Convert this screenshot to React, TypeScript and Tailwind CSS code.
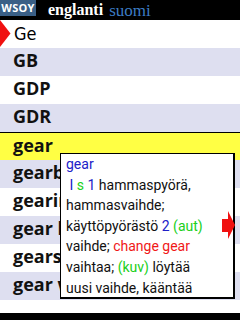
import React from "react";

const rows: { t: string; bg: string }[] = [
  { t: "GB", bg: "bg-[#dedff0]" },
  { t: "GDP", bg: "bg-white" },
  { t: "GDR", bg: "bg-[#dedff0]" },
];
const rows2: { t: string; bg: string }[] = [
  { t: "gearbox", bg: "bg-[#dedff0]" },
  { t: "gearing", bg: "bg-white" },
  { t: "gear lever", bg: "bg-[#dedff0]" },
  { t: "gearshift", bg: "bg-white" },
  { t: "gear wheel", bg: "bg-[#dedff0]" },
];

export default function App() {
  const listFont = { fontFamily: '"Open Sans", sans-serif' };
  return (
    <div className="relative w-[240px] h-[320px] overflow-hidden bg-white">
      <div className="flex h-[20px] bg-black items-start">
        <div className="flex h-[16px] w-[36px] items-center justify-center bg-[#3a5f86] text-white text-[11px] font-bold tracking-[0.3px]" style={listFont}>
          WSOY
        </div>
        <div className="ml-[12px] flex items-center h-[20px] text-[16px] leading-none" style={{ fontFamily: '"Liberation Serif", serif' }}>
          <span className="text-white font-bold">englanti</span>
          <span className="ml-[6px] text-[#3c7cc4] text-[17px]">suomi</span>
        </div>
      </div>
      <div className="flex flex-col">
        <div className="relative flex h-[28px] items-center bg-white pl-[14px] pb-[2px] text-[18px] text-black" style={{ fontFamily: '"DejaVu Sans Condensed", "DejaVu Sans", sans-serif' }}>
          <svg className="absolute left-0 top-0" width="11" height="28" viewBox="0 0 11 28">
            <polygon points="0,0 10.5,13.5 0,27" fill="#f01010" />
          </svg>
          Ge
        </div>
        {rows.map((r) => (
          <div key={r.t} className={`flex h-[28px] items-center pl-[13px] pb-[3px] text-[18px] font-bold text-[#111] ${r.bg}`} style={listFont}>
            {r.t}
          </div>
        ))}
        <div className="flex h-[28px] items-center border-t border-black bg-[#ffff44] pl-[13px] pb-[3px] text-[18px] font-bold text-[#111]" style={listFont}>
          gear
        </div>
        {rows2.map((r) => (
          <div key={r.t} className={`flex h-[28px] items-center pl-[13px] pb-[3px] text-[18px] font-bold text-[#111] whitespace-nowrap ${r.bg}`} style={listFont}>
            {r.t}
          </div>
        ))}
      </div>
      <div className="absolute left-0 bottom-0 h-[7px] w-full bg-black" />
      <div
        className="absolute left-[60px] top-[153px] w-[175px] h-[146px] border border-black border-r-2 border-b-2 bg-white pl-[5px] text-[14px] leading-[20.6px] text-[#111] whitespace-nowrap"
        style={{ fontFamily: 'Roboto, sans-serif' }}
      >
        <div className="text-[#2020c8]">gear</div>
        <div>
          <span className="text-[#2020c8]">&nbsp;I </span>
          <span className="text-[#20d020]">s</span>
          <span className="text-[#2020c8]"> 1</span> hammaspyörä,
        </div>
        <div>hammasvaihde;</div>
        <div>
          käyttöpyörästö <span className="text-[#2020c8]">2</span>{" "}
          <span className="text-[#20d020]">(aut)</span>
        </div>
        <div>
          vaihde; <span className="text-[#f01818]">change gear</span>
        </div>
        <div>
          vaihtaa; <span className="text-[#20d020]">(kuv)</span> löytää
        </div>
        <div>uusi vaihde, kääntää</div>
        <svg className="absolute left-[161px] top-[57px]" width="13" height="30" viewBox="0 0 13 30">
          <polygon points="0,8 6,8 6,0 13,14 6,28 6,21 0,21" fill="#f01010" />
        </svg>
      </div>
    </div>
  );
}
